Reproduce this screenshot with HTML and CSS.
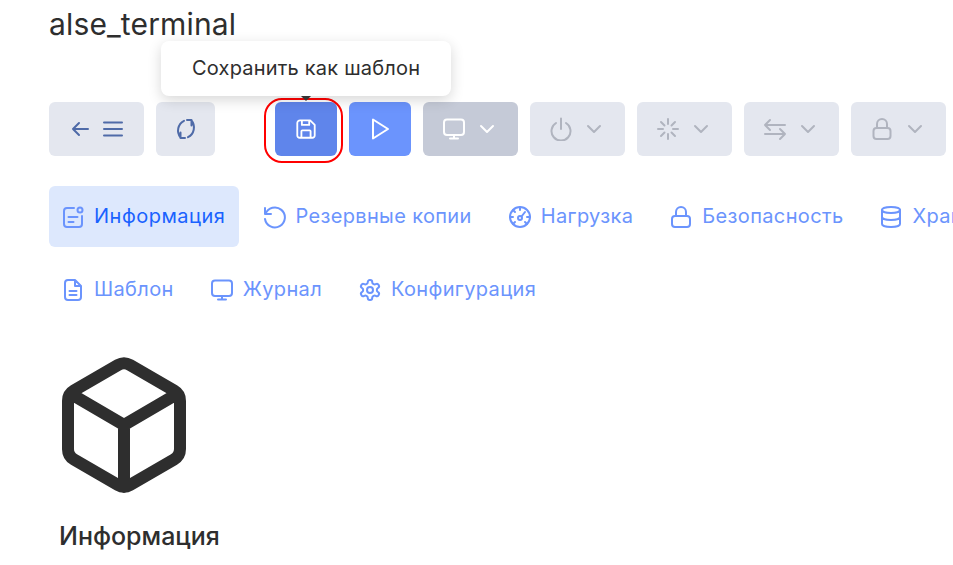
FILE: index.html
```html
<!DOCTYPE html>
<html lang="ru">
<head>
<meta charset="utf-8">
<title>alse_terminal</title>
<link rel="stylesheet" href="styles.css">
</head>
<body>
<main class="page">
  <h1 class="title">alse_terminal</h1>
  <div class="toolbar">
    <button class="btn btn-nav">
      <svg class="ic" viewBox="0 0 24 24"><path d="M20 12H5M11 6l-6 6 6 6"/></svg>
      <svg class="ic" viewBox="0 0 24 24"><path d="M3 5.500h18M3 12h18M3 18.500h18"/></svg>
    </button>
    <button class="btn btn-sync">
      <svg class="ic" viewBox="0 0 24 24"><path d="M10 3.800A11 11 0 0 0 6.500 20.500M14 20.200A11 11 0 0 0 17.500 3.500M6.500 15.500v5.500H11M17.500 8.500V3H13"/></svg>
    </button>
    <div class="save-wrap">
      <button class="btn btn-save">
        <svg class="ic" viewBox="0 0 24 24"><path d="M5.500 2.500h11L21.500 7.500v11.500a2.500 2.500 0 0 1-2.500 2.500H5A2.500 2.500 0 0 1 2.500 19V5.500A3 3 0 0 1 5.500 2.500zM7.500 2.500v5h8v-5M7 21.500v-7a1 1 0 0 1 1-1h8a1 1 0 0 1 1 1v7"/></svg>
      </button>
      <span class="ring"></span>
      <span class="tip-arrow"></span>
      <div class="tooltip">Сохранить как шаблон</div>
    </div>
    <button class="btn btn-play">
      <svg class="ic" viewBox="0 0 24 24"><path d="M5 2.500v19L20 12z"/></svg>
    </button>
    <button class="btn btn-drop btn-monitor">
      <svg class="ic" viewBox="0 0 24 24"><rect x="2" y="2.500" width="20" height="15.500" rx="3"/><path d="M12 18v3.500M8 21.500h8"/></svg>
      <svg class="chev" viewBox="0 0 16 16"><path d="M2 5l6 6 6-6"/></svg>
    </button>
    <button class="btn btn-drop btn-off">
      <svg class="ic" viewBox="0 0 24 24"><path d="M12 1.500V12M7 6a9.500 9.500 0 1 0 10 0"/></svg>
      <svg class="chev" viewBox="0 0 16 16"><path d="M2 5l6 6 6-6"/></svg>
    </button>
    <button class="btn btn-drop btn-off">
      <svg class="ic" viewBox="0 0 24 24"><path d="M12 2v5M12 17v5M2 12h5M17 12h5M5 5l3.500 3.500M15.500 15.500L19 19M19 5l-3.500 3.500M8.500 15.500L5 19"/></svg>
      <svg class="chev" viewBox="0 0 16 16"><path d="M2 5l6 6 6-6"/></svg>
    </button>
    <button class="btn btn-drop btn-off">
      <svg class="ic" viewBox="0 0 24 24"><path d="M22 8H2M7 3L2 8l5 5M2 17h20M17 12l5 5-5 5"/></svg>
      <svg class="chev" viewBox="0 0 16 16"><path d="M2 5l6 6 6-6"/></svg>
    </button>
    <button class="btn btn-drop btn-off">
      <svg class="ic" viewBox="0 0 24 24"><rect x="3.500" y="11" width="17" height="11" rx="3"/><path d="M7 11V7a5 5 0 0 1 10 0v4"/></svg>
      <svg class="chev" viewBox="0 0 16 16"><path d="M2 5l6 6 6-6"/></svg>
    </button>
  </div>
  <nav class="tabs">
    <a class="tab tab-active">
      <svg class="ic" viewBox="0 0 24 24"><path d="M13 3H6a3 3 0 0 0-3 3v13a3 3 0 0 0 3 3h12a3 3 0 0 0 3-3v-8M7.500 12h9M7.500 17h5"/><circle cx="19" cy="5" r="2.500"/></svg>
      <span>Информация</span>
    </a>
    <a class="tab">
      <svg class="ic" viewBox="0 0 24 24"><path d="M3 3v6h6M3.500 9A10 10 0 1 1 3 14"/></svg>
      <span>Резервные копии</span>
    </a>
    <a class="tab">
      <svg class="ic" viewBox="0 0 24 24"><circle cx="12" cy="12" r="10"/><circle cx="12" cy="13" r="2"/><path d="M13.500 11.500L17 7M12 2v3M2 12h3M19 12h3M5 5l2 2M5 19l2-2M19 19l-2-2"/></svg>
      <span>Нагрузка</span>
    </a>
    <a class="tab">
      <svg class="ic" viewBox="0 0 24 24"><rect x="3" y="11" width="18" height="11" rx="3"/><path d="M7 11V7a5 5 0 0 1 10 0v4"/></svg>
      <span>Безопасность</span>
    </a>
    <a class="tab">
      <svg class="ic" viewBox="0 0 24 24"><ellipse cx="12" cy="5" rx="9" ry="3"/><path d="M3 5v14c0 1.700 4 3 9 3s9-1.300 9-3V5M3 12c0 1.700 4 3 9 3s9-1.300 9-3"/></svg>
      <span>Хранилище</span>
    </a>
    <a class="tab">
      <svg class="ic" viewBox="0 0 24 24"><path d="M14 2H7a3 3 0 0 0-3 3v14a3 3 0 0 0 3 3h10a3 3 0 0 0 3-3V8zM14 2v6h6M8.500 13h7M8.500 17h7"/></svg>
      <span>Шаблон</span>
    </a>
    <a class="tab">
      <svg class="ic" viewBox="0 0 24 24"><rect x="2" y="2.500" width="20" height="15.500" rx="3"/><path d="M12 18v3.500M8 21.500h8"/></svg>
      <span>Журнал</span>
    </a>
    <a class="tab">
      <svg class="ic" viewBox="0 0 24 24"><circle cx="12" cy="12" r="3"/><path d="M12.220 2h-.44a2 2 0 0 0-2 2v.18a2 2 0 0 1-1 1.730l-.43.25a2 2 0 0 1-2 0l-.15-.08a2 2 0 0 0-2.730.73l-.22.38a2 2 0 0 0 .73 2.730l.15.1a2 2 0 0 1 1 1.720v.51a2 2 0 0 1-1 1.740l-.15.09a2 2 0 0 0-.73 2.730l.22.38a2 2 0 0 0 2.730.73l.15-.08a2 2 0 0 1 2 0l.43.25a2 2 0 0 1 1 1.730V20a2 2 0 0 0 2 2h.44a2 2 0 0 0 2-2v-.18a2 2 0 0 1 1-1.730l.43-.25a2 2 0 0 1 2 0l.15.08a2 2 0 0 0 2.730-.73l.22-.39a2 2 0 0 0-.73-2.730l-.15-.08a2 2 0 0 1-1-1.740v-.5a2 2 0 0 1 1-1.740l.15-.09a2 2 0 0 0 .73-2.730l-.22-.38a2 2 0 0 0-2.730-.73l-.15.08a2 2 0 0 1-2 0l-.43-.25a2 2 0 0 1-1-1.730V4a2 2 0 0 0-2-2z"/></svg>
      <span>Конфигурация</span>
    </a>
  </nav>
  <section class="info">
    <svg class="cube" viewBox="0 0 124 136"><path d="M56 8L12 33.500a12 12 0 0 0-6 10.400v48.200a12 12 0 0 0 6 10.400L56 128a12 12 0 0 0 12 0l44-25.500a12 12 0 0 0 6-10.400V43.900a12 12 0 0 0-6-10.400L68 8a12 12 0 0 0-12 0zM9 37l53 31 53-31M62 68v62"/></svg>
    <h2 class="info-title">Информация</h2>
  </section>
</main>
</body>
</html>
```

FILE: styles.css
```css
* { box-sizing: border-box; }
html, body { margin: 0; height: 100%; overflow: hidden; background: #fff; }
body { font-family: "Inter", sans-serif; color: #2e2e2e; }
.page { width: 1100px; padding: 0 0 0 49px; }
.title { margin: 0; height: 102px; padding-top: 6px; font-size: 30px; line-height: 37px; font-weight: 400; letter-spacing: .15px; }
.toolbar { display: flex; gap: 12px; height: 54px; }
.btn { display: flex; align-items: center; justify-content: center; height: 54px; border: 0; border-radius: 6px; padding: 0; background: #e4e7ef; }
.ic { width: 24px; height: 24px; fill: none; stroke: currentColor; stroke-width: 2; stroke-linecap: round; stroke-linejoin: round; flex: none; }
.chev { width: 16px; height: 16px; fill: none; stroke: currentColor; stroke-width: 2; stroke-linecap: round; stroke-linejoin: round; flex: none; }
.btn-nav { width: 95px; gap: 9px; color: #4f6ba8; }
.btn-sync { width: 59px; margin-right: 48px; color: #4f6ba8; }
.save-wrap { position: relative; display: flex; }
.btn-save { width: 62px; background: #5f85eb; color: #fff; }
.btn-save .ic { width: 22px; height: 22px; }
.ring { position: absolute; left: -11px; top: -4px; width: 79px; height: 65px; border: 2px solid #f00; border-radius: 18px; }
.tip-arrow { position: absolute; left: 26px; top: -6px; border: 5px solid transparent; border-top-color: #3a3a3a; border-bottom: 0; }
.tooltip { position: absolute; left: -114px; top: -61px; width: 290px; height: 55px; display: flex; align-items: center; padding: 0 0 2px 31px; background: #fff; border-radius: 8px; box-shadow: 0 4px 14px rgba(0,0,0,.16); font-size: 20px; letter-spacing: .2px; white-space: nowrap; }
.btn-play { width: 62px; background: #6b94fd; color: #fff; }
.btn-drop { width: 95px; gap: 13px; padding-right: 4px; }
.btn-monitor { background: #c5cad7; color: #fff; }
.btn-off { color: #b0b4bf; }
.tabs { display: flex; flex-wrap: wrap; align-items: center; gap: 12px 11px; margin-top: 30px; color: #6b94fd; }
.tab { display: flex; align-items: center; gap: 9px; height: 61px; padding: 0 13px 2px 12px; border-radius: 6px; font-size: 20px; letter-spacing: .35px; white-space: nowrap; }
.tab .ic { margin-top: 2px; }
.tab-active { padding-right: 14px; background: #dde8fd; letter-spacing: .5px; }
.tab-active span { color: #1a62ff; }
.info { padding: 37px 0 0 13px; }
.cube { display: block; width: 124px; height: 136px; fill: none; stroke: #2e2e2e; stroke-width: 12; stroke-linecap: round; stroke-linejoin: round; }
.info-title { margin: 27px 0 0 -3px; font-size: 25px; line-height: 33px; font-weight: 500; }
```
